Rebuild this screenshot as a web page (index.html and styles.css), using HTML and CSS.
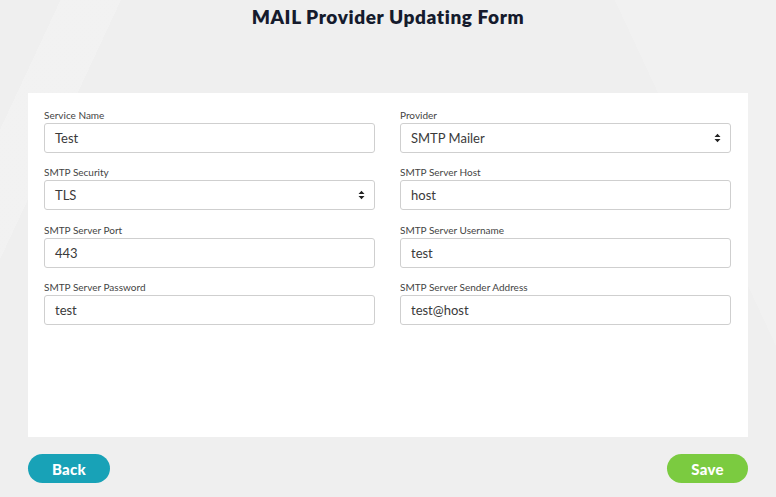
FILE: index.html
```html
<!DOCTYPE html>
<html>
<head>
<meta charset="utf-8">
<link rel="stylesheet" href="styles.css">
</head>
<body>
<div class="page">
  <h1 class="title">MAIL Provider Updating Form</h1>
  <div class="card">
    <div class="grid">
      <div class="field">
        <label class="label">Service Name</label>
        <div class="input">Test</div>
      </div>
      <div class="field">
        <label class="label">Provider</label>
        <div class="input select">SMTP Mailer<span class="caret"><svg width="7" height="10" viewBox="0 0 7 10"><path d="M0.5 4 L3.5 0.8 L6.5 4 Z M0.5 6 L3.5 9.2 L6.5 6 Z" fill="#222"/></svg></span></div>
      </div>
      <div class="field">
        <label class="label">SMTP Security</label>
        <div class="input select">TLS<span class="caret"><svg width="7" height="10" viewBox="0 0 7 10"><path d="M0.5 4 L3.5 0.8 L6.5 4 Z M0.5 6 L3.5 9.2 L6.5 6 Z" fill="#222"/></svg></span></div>
      </div>
      <div class="field">
        <label class="label">SMTP Server Host</label>
        <div class="input">host</div>
      </div>
      <div class="field">
        <label class="label">SMTP Server Port</label>
        <div class="input">443</div>
      </div>
      <div class="field">
        <label class="label">SMTP Server Username</label>
        <div class="input">test</div>
      </div>
      <div class="field">
        <label class="label">SMTP Server Password</label>
        <div class="input">test</div>
      </div>
      <div class="field">
        <label class="label">SMTP Server Sender Address</label>
        <div class="input">test@host</div>
      </div>
    </div>
  </div>
  <div class="actions">
    <button class="btn back">Back</button>
    <button class="btn save">Save</button>
  </div>
</div>
</body>
</html>
```
FILE: styles.css
```css
html, body {
  margin: 0;
  padding: 0;
}
body {
  width: 776px;
  height: 497px;
  overflow: hidden;
  background: #efefef;
  background-image:
    linear-gradient(115deg, transparent 0 6%, rgba(255,255,255,0.18) 6% 12%, transparent 12% 100%),
    linear-gradient(65deg, transparent 0 84%, rgba(255,255,255,0.15) 84% 100%);
  font-family: "Lato", "Liberation Sans", sans-serif;
}
.page {
  padding: 0 28px;
}
.title {
  margin: 0;
  padding-top: 5px;
  height: 93px;
  box-sizing: border-box;
  text-align: center;
  font-size: 19px;
  font-weight: 800;
  color: #151b2d;
  letter-spacing: 0.6px;
  line-height: 24px;
}
.card {
  background: #fff;
  height: 344px;
  box-sizing: border-box;
  padding: 15px 17px 0 16px;
}
.grid {
  display: grid;
  grid-template-columns: 331px 331px;
  column-gap: 25px;
  row-gap: 12.33px;
}
.field {
  display: flex;
  flex-direction: column;
}
.label {
  font-size: 10px;
  color: #444;
  height: 15px;
  line-height: 15px;
}
.input {
  height: 30px;
  box-sizing: border-box;
  border: 1px solid #cfcfcf;
  border-radius: 3px;
  padding: 0 10px;
  font-size: 13px;
  color: #3a3a3a;
  display: flex;
  align-items: center;
  justify-content: space-between;
}
.caret {
  display: flex;
  align-items: center;
  margin-right: -1px;
}
.actions {
  display: flex;
  justify-content: space-between;
  padding-top: 17px;
}
.btn {
  width: 82px;
  height: 29px;
  border: none;
  border-radius: 15px;
  color: #fff;
  font-family: "Lato", "Liberation Sans", sans-serif;
  font-weight: 900;
  font-size: 15px;
  letter-spacing: 0.3px;
  padding: 0;
}
.back {
  background: #18a2b7;
}
.save {
  background: #7bcb40;
  width: 81px;
}
```
